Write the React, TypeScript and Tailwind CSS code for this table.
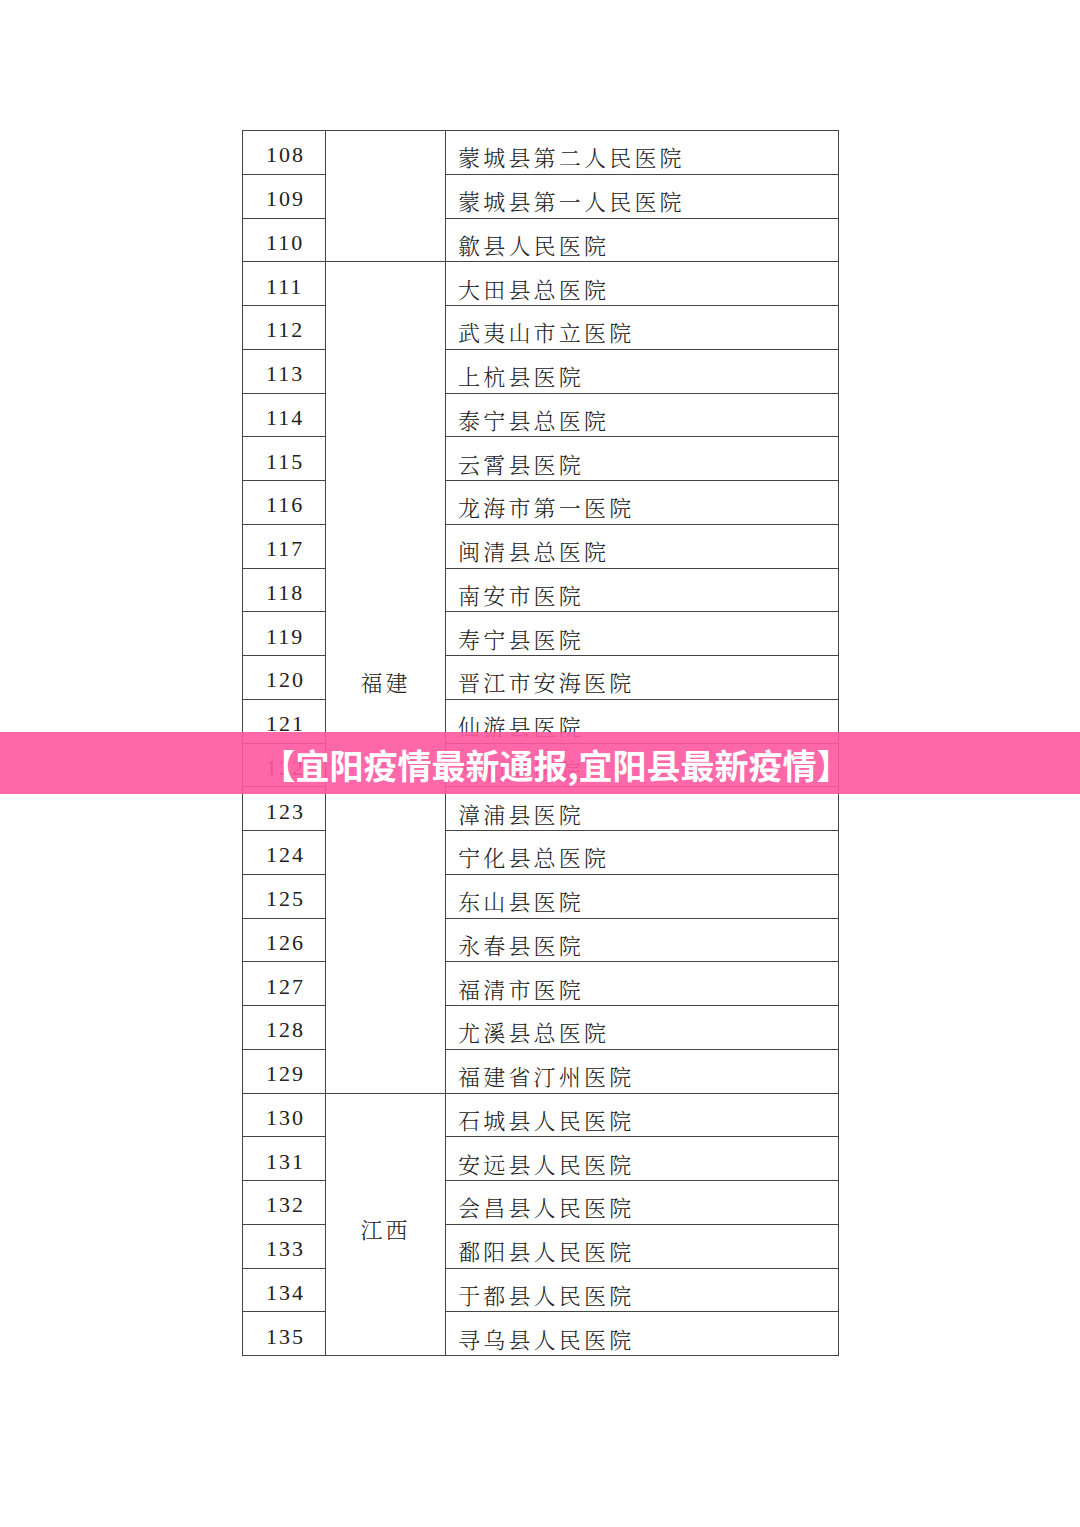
import React from "react";

const rows: { n: number; name: string }[] = [
  { n: 108, name: "蒙城县第二人民医院" },
  { n: 109, name: "蒙城县第一人民医院" },
  { n: 110, name: "歙县人民医院" },
  { n: 111, name: "大田县总医院" },
  { n: 112, name: "武夷山市立医院" },
  { n: 113, name: "上杭县医院" },
  { n: 114, name: "泰宁县总医院" },
  { n: 115, name: "云霄县医院" },
  { n: 116, name: "龙海市第一医院" },
  { n: 117, name: "闽清县总医院" },
  { n: 118, name: "南安市医院" },
  { n: 119, name: "寿宁县医院" },
  { n: 120, name: "晋江市安海医院" },
  { n: 121, name: "仙游县医院" },
  { n: 122, name: "平和县医院" },
  { n: 123, name: "漳浦县医院" },
  { n: 124, name: "宁化县总医院" },
  { n: 125, name: "东山县医院" },
  { n: 126, name: "永春县医院" },
  { n: 127, name: "福清市医院" },
  { n: 128, name: "尤溪县总医院" },
  { n: 129, name: "福建省汀州医院" },
  { n: 130, name: "石城县人民医院" },
  { n: 131, name: "安远县人民医院" },
  { n: 132, name: "会昌县人民医院" },
  { n: 133, name: "鄱阳县人民医院" },
  { n: 134, name: "于都县人民医院" },
  { n: 135, name: "寻乌县人民医院" },
];

const groups: Record<number, { label: string; span: number }> = {
  108: { label: "", span: 3 },
  111: { label: "福建", span: 19 },
  130: { label: "江西", span: 6 },
};

const cjk = "font-['Noto_Serif_CJK_SC','Noto_Sans_CJK_SC',serif]";

export default function App() {
  return (
    <div className="relative w-[1080px] h-[1527px] bg-white overflow-hidden">
      <div className="pt-[130px] pl-[242px]">
        <table className="border-collapse border border-[#555] text-[#222]">
          <tbody>
            {rows.map((r) => (
              <tr key={r.n} className="h-[43.75px]">
                <td className="w-[83px] border border-[#444] p-0 pt-[6px] pl-[23px] text-left align-middle font-['Liberation_Serif',serif] text-[22px] tracking-[2px] leading-none">
                  {r.n}
                </td>
                {groups[r.n] && (
                  <td
                    rowSpan={groups[r.n].span}
                    className={`w-[120px] border border-[#444] p-0 pt-[10px] text-center align-middle text-[22px] font-light tracking-[3px] leading-none ${cjk}`}
                  >
                    {groups[r.n].label}
                  </td>
                )}
                <td
                  className={`w-[393px] border border-[#444] p-0 pt-[10px] pl-[12px] text-left align-middle text-[22px] font-light tracking-[3.2px] leading-none ${cjk}`}
                >
                  {r.name}
                </td>
              </tr>
            ))}
          </tbody>
        </table>
      </div>
      <div className="absolute left-0 top-[732px] w-full h-[62px] bg-[#ff589e]/90 flex items-center justify-center pl-[32px] pt-[4px]">
        <span className="text-white font-bold text-[34px] leading-none font-['Noto_Sans_CJK_SC',sans-serif]">
          【宜阳疫情最新通报,宜阳县最新疫情】
        </span>
      </div>
    </div>
  );
}
